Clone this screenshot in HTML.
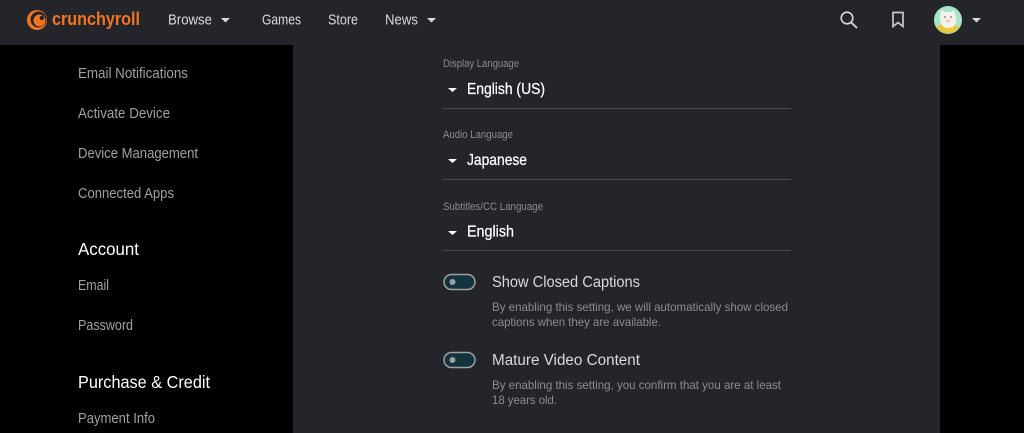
<!DOCTYPE html>
<html lang="en"><head><meta charset="utf-8"><title>Settings</title>
<style>html,body{margin:0;padding:0;background:#000;width:1024px;height:433px;overflow:hidden}svg{display:block}text{font-family:"Liberation Sans",sans-serif}</style></head>
<body>
<svg width="1024" height="433" viewBox="0 0 1024 433" xmlns="http://www.w3.org/2000/svg">
<rect width="1024" height="433" fill="#000"/>
<rect x="293" y="45" width="647" height="388" fill="#23252b"/>
<rect width="1024" height="45" fill="#23252b"/>

<!-- logo -->
<circle cx="37" cy="20" r="10" fill="#f47521"/>
<circle cx="38.500" cy="19.500" r="8" fill="#23252b"/>
<circle cx="39.500" cy="20.500" r="6" fill="#f47521"/>
<circle cx="41.800" cy="18" r="2.200" fill="#23252b"/>
<text x="52" y="25" font-size="18" font-weight="700" fill="#f47521" textLength="88" lengthAdjust="spacingAndGlyphs">crunchyroll</text>

<!-- nav -->
<g font-size="15" fill="#dadada">
<text x="168" y="24.500" textLength="44" lengthAdjust="spacingAndGlyphs">Browse</text>
<text x="262" y="24.500" textLength="39" lengthAdjust="spacingAndGlyphs">Games</text>
<text x="328" y="24.500" textLength="30" lengthAdjust="spacingAndGlyphs">Store</text>
<text x="385" y="24.500" textLength="33" lengthAdjust="spacingAndGlyphs">News</text>
</g>
<path d="M221 18h9l-4.500 4.500z" fill="#dadada"/>
<path d="M427 18h9l-4.500 4.500z" fill="#dadada"/>

<!-- right icons -->
<circle cx="847" cy="18" r="5.800" fill="none" stroke="#dadada" stroke-width="1.600"/>
<path d="M851.200 22.500 L856.500 27.500" stroke="#dadada" stroke-width="1.800" stroke-linecap="round"/>
<path d="M893 12.500 H903 V26.500 L898 22.500 L893 26.500 Z" fill="none" stroke="#c8c8c8" stroke-width="1.700"/>
<circle cx="948" cy="20" r="14" fill="#a8e6c8"/>
<path d="M936 27 L942 24 L956 25 L959 28 A14 14 0 0 1 937 28 Z" fill="#e8c93c"/>
<path d="M941 10 L944 12 H951 L954 10 L956 19 Q957 28 948 28 Q941 28 940 19 Z" fill="#f5f1ec"/>
<circle cx="945" cy="17" r="1" fill="#a88"/><circle cx="951" cy="17" r="1" fill="#a88"/>
<ellipse cx="948" cy="21" rx="2" ry="1.500" fill="#eec4c0"/>
<path d="M972 18h9l-4.500 4.500z" fill="#dadada"/>

<!-- sidebar -->
<g font-size="14.500" fill="#a0a0a0">
<text x="78" y="78" textLength="110" lengthAdjust="spacingAndGlyphs">Email Notifications</text>
<text x="78" y="118" textLength="92" lengthAdjust="spacingAndGlyphs">Activate Device</text>
<text x="78" y="158" textLength="120" lengthAdjust="spacingAndGlyphs">Device Management</text>
<text x="78" y="198" textLength="96" lengthAdjust="spacingAndGlyphs">Connected Apps</text>
<text x="78" y="290" textLength="31" lengthAdjust="spacingAndGlyphs">Email</text>
<text x="78" y="330" textLength="55" lengthAdjust="spacingAndGlyphs">Password</text>
<text x="78" y="423" textLength="77" lengthAdjust="spacingAndGlyphs">Payment Info</text>
</g>
<g font-size="17.500" fill="#fff">
<text x="78" y="255" textLength="61" lengthAdjust="spacingAndGlyphs">Account</text>
<text x="78" y="388" textLength="132" lengthAdjust="spacingAndGlyphs">Purchase &amp; Credit</text>
</g>

<!-- language selects -->
<g font-size="11" fill="#8d8d8f">
<text x="443" y="67" textLength="76" lengthAdjust="spacingAndGlyphs">Display Language</text>
<text x="443" y="138" textLength="70" lengthAdjust="spacingAndGlyphs">Audio Language</text>
<text x="443" y="210" textLength="100" lengthAdjust="spacingAndGlyphs">Subtitles/CC Language</text>
</g>
<g font-size="16" fill="#fff" stroke="#fff" stroke-width=".25">
<text x="467" y="94" textLength="78" lengthAdjust="spacingAndGlyphs">English (US)</text>
<text x="467" y="165" textLength="60" lengthAdjust="spacingAndGlyphs">Japanese</text>
<text x="467" y="236.500" textLength="47" lengthAdjust="spacingAndGlyphs">English</text>
</g>
<path d="M448 88h9l-4.500 4z" fill="#fff"/>
<path d="M448 159h9l-4.500 4z" fill="#fff"/>
<path d="M448 231h9l-4.500 4z" fill="#fff"/>
<rect x="443" y="108" width="348" height="1" fill="#4a4c51"/>
<rect x="443" y="179" width="348" height="1" fill="#4a4c51"/>
<rect x="443" y="250" width="348" height="1" fill="#4a4c51"/>

<!-- toggles -->
<rect x="444" y="274.500" width="31" height="15" rx="7.500" fill="#13343f" stroke="#a0a0a0" stroke-width="1.500"/>
<circle cx="452.500" cy="282" r="3" fill="#a0a0a0"/>
<rect x="444" y="352.500" width="31" height="15" rx="7.500" fill="#13343f" stroke="#a0a0a0" stroke-width="1.500"/>
<circle cx="452.500" cy="360" r="3" fill="#a0a0a0"/>

<g font-size="15.500" fill="#dadada">
<text x="492" y="287" textLength="148" lengthAdjust="spacingAndGlyphs">Show Closed Captions</text>
<text x="492" y="365" textLength="148" lengthAdjust="spacingAndGlyphs">Mature Video Content</text>
</g>
<g font-size="12" fill="#8d8d8f">
<text x="492" y="311" textLength="296" lengthAdjust="spacingAndGlyphs">By enabling this setting, we will automatically show closed</text>
<text x="492" y="326" textLength="169" lengthAdjust="spacingAndGlyphs">captions when they are available.</text>
<text x="492" y="389" textLength="289" lengthAdjust="spacingAndGlyphs">By enabling this setting, you confirm that you are at least</text>
<text x="492" y="404" textLength="65" lengthAdjust="spacingAndGlyphs">18 years old.</text>
</g>
</svg>
</body></html>
